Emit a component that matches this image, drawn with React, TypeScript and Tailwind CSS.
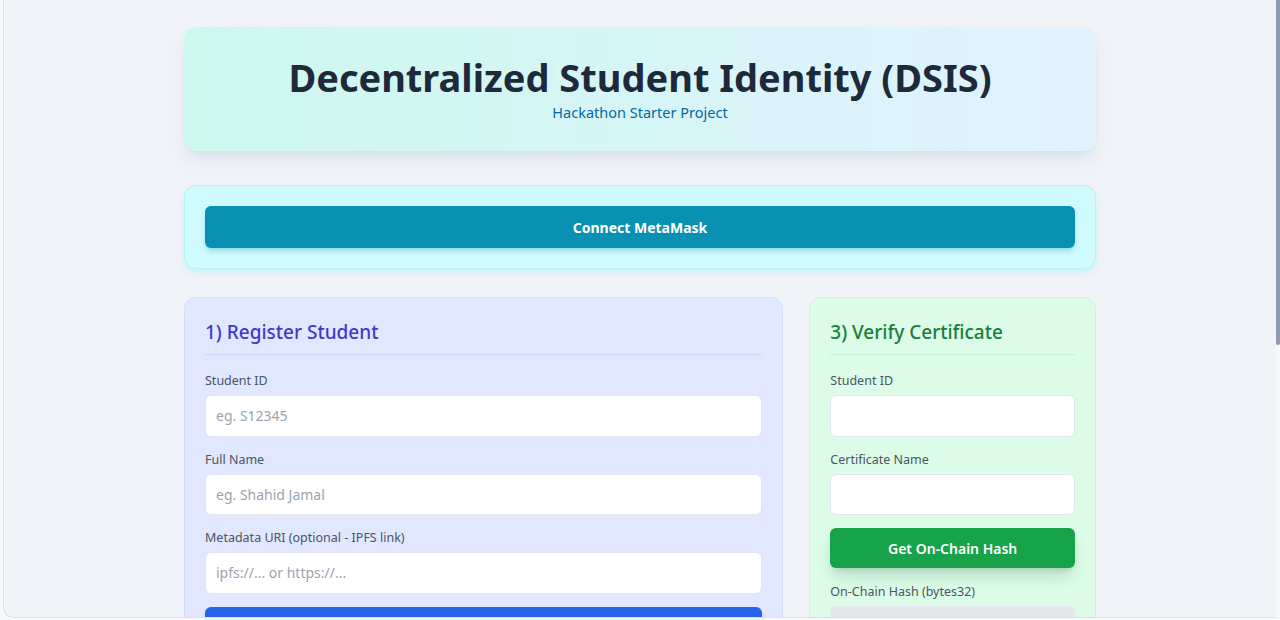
import React from 'react';

const font = { fontFamily: '"Noto Sans", "Open Sans", sans-serif' };

function Field({ label, placeholder, disabled }: { label: string; placeholder?: string; disabled?: boolean }) {
  return (
    <div className="mb-[13px]">
      <label className="block text-[12.5px] leading-[20px] text-[#4b5563] mb-1">{label}</label>
      <input
        placeholder={placeholder}
        disabled={disabled}
        className={`w-full h-[41.5px] rounded-md border border-[#e2e6ec] px-2.5 text-[14px] text-slate-700 placeholder:text-[#9ca3af] outline-none ${
          disabled ? 'bg-[#e5e7eb]' : 'bg-white'
        }`}
      />
    </div>
  );
}

export default function App() {
  return (
    <div className="h-[620px] flex bg-[#f7f8fa] overflow-hidden" style={font}>
      {/* page frame */}
      <div className="flex-1 ml-[3px] mb-[2px] border-l border-b border-[#dde2e8] rounded-bl-[10px] bg-[#f0f3f8] overflow-hidden">
        <div className="w-[912px] mx-auto pt-[27px]">
          {/* header */}
          <div className="rounded-xl bg-gradient-to-r from-[#ccf8ee] to-[#e0f2fe] shadow-lg shadow-slate-300/60 pt-[26px] pb-[29px] text-center">
            <h1 className="text-[38px] leading-[48px] font-bold text-[#1e293b]">Decentralized Student Identity (DSIS)</h1>
            <p className="text-[14.5px] leading-[20px] text-[#0369a1] mt-px">Hackathon Starter Project</p>
          </div>

          {/* connect */}
          <div className="mt-[34px] rounded-xl bg-[#cffafe] border border-[#b3f0f8] shadow-md shadow-cyan-200/50 p-5">
            <button className="w-full h-[42px] rounded-md bg-[#0891b2] text-white font-bold text-[14px] shadow-md shadow-cyan-700/20">
              Connect MetaMask
            </button>
          </div>

          {/* cards */}
          <div className="grid grid-cols-3 gap-[26px] mt-[28px]">
            <div className="col-span-2 rounded-xl bg-[#e0e7ff] border border-[#d4dcfc] p-5">
              <h2 className="text-[19px] leading-[28px] font-medium text-[#4338ca] pb-2 border-b border-[#cdd6fb] mb-4">
                1) Register Student
              </h2>
              <Field label="Student ID" placeholder="eg. S12345" />
              <Field label="Full Name" placeholder="eg. Shahid Jamal" />
              <Field label="Metadata URI (optional - IPFS link)" placeholder="ipfs://... or https://..." />
              <button className="w-full h-[42px] rounded-md bg-[#2563eb] text-white font-semibold text-[14px] shadow-md">
                Register Student
              </button>
            </div>

            <div className="rounded-xl bg-[#dcfce7] border border-[#cbf5d8] p-5">
              <h2 className="text-[19px] leading-[28px] font-medium text-[#15803d] pb-2 border-b border-[#c6f0d3] mb-4">
                3) Verify Certificate
              </h2>
              <Field label="Student ID" />
              <Field label="Certificate Name" />
              <button className="w-full h-[40px] rounded-md bg-[#16a34a] text-white font-semibold text-[14px] shadow-lg shadow-green-900/20 mb-[14px]">
                Get On-Chain Hash
              </button>
              <Field label="On-Chain Hash (bytes32)" disabled />
            </div>
          </div>
        </div>
      </div>
      {/* scrollbar */}
      <div className="w-[4px] shrink-0">
        <div className="h-[345px] bg-[#8e9bb0] rounded-b-sm" />
      </div>
    </div>
  );
}
